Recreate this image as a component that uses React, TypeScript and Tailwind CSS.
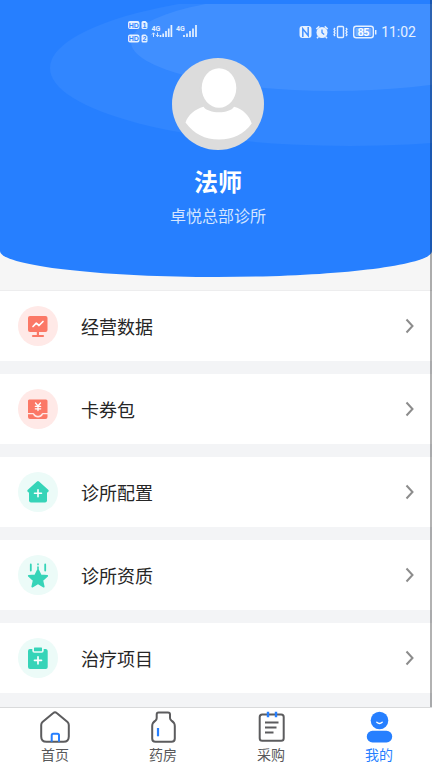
import React from 'react';

interface MenuItem {
  id: string;
  label: string;
  tint: string;
  icon: React.ReactNode;
}

interface TabItem {
  id: string;
  label: string;
  active?: boolean;
  icon: React.ReactNode;
}

const menuItems: MenuItem[] = [
  {
    id: 'data',
    label: '经营数据',
    tint: 'bg-[#ffe9e7] text-[#fb7866]',
    icon: (
      <>
        <rect x="10" y="10" width="19.500" height="16" rx="2" fill="currentColor" />
        <path d="M18.800 26h2.200v4h-2.200z" fill="currentColor" />
        <path d="M15 30h10" stroke="currentColor" strokeWidth="2.200" strokeLinecap="round" />
        <path d="M15 20.500l3.300-3.300 2.700 2.300 4-4" fill="none" stroke="#fff" strokeWidth="1.700" strokeLinecap="round" strokeLinejoin="round" />
      </>
    )
  },
  {
    id: 'coupons',
    label: '卡券包',
    tint: 'bg-[#ffe9e7] text-[#fb7866]',
    icon: (
      <>
        <path d="M12 10.500h16a1.500 1.500 0 0 1 1.500 1.500v12h-4.500q-1 0-1.600 1c-1.400 2.400-5.400 2.400-6.800 0q-.6-1-1.600-1H10V12a1.500 1.500 0 0 1 2-1.500z" fill="currentColor" />
        <path d="M10 25.300h5c1.500 4.300 8.500 4.300 10 0h4.500V28a2 2 0 0 1-2 2H12a2 2 0 0 1-2-2z" fill="currentColor" />
        <path d="M17.500 14l2.500 3 2.500-3M17.300 17.300h5.400M17.300 19.800h5.400M20 17v4.500" fill="none" stroke="#fff" strokeWidth="1.300" strokeLinecap="round" />
      </>
    )
  },
  {
    id: 'settings',
    label: '诊所配置',
    tint: 'bg-[#ecfbf8] text-[#36d4b8]',
    icon: (
      <>
        <path d="M10.800 18.800L20 10.500l9.200 8.300" fill="none" stroke="currentColor" strokeWidth="3" strokeLinecap="round" strokeLinejoin="round" />
        <path d="M20 10l9 8V28.500a2 2 0 0 1-2 2H13a2 2 0 0 1-2-2V18z" fill="currentColor" />
        <path d="M20 17.800v7M16.500 21.300h7" stroke="#fff" strokeWidth="1.600" strokeLinecap="round" />
      </>
    )
  },
  {
    id: 'certificates',
    label: '诊所资质',
    tint: 'bg-[#ecfbf8] text-[#36d4b8]',
    icon: (
      <>
        <path d="M12.800 9.500v6M27.200 9.500v6" stroke="currentColor" strokeWidth="1.800" strokeLinecap="round" />
        <path d="M20 9v.6M20 12v1.500" stroke="currentColor" strokeWidth="1.600" strokeLinecap="round" />
        <path d="M20 14.500l2.700 5.700 6.600.7-4.900 4.400 1.400 6.400-5.800-3.300-5.800 3.300 1.400-6.400-4.900-4.400 6.600-.7z" fill="currentColor" stroke="currentColor" strokeWidth="1.600" strokeLinejoin="round" />
      </>
    )
  },
  {
    id: 'treatments',
    label: '治疗项目',
    tint: 'bg-[#ecfbf8] text-[#36d4b8]',
    icon: (
      <>
        <path d="M12 11h2.300v1.700a2 2 0 0 0 2 2h7.400a2 2 0 0 0 2-2V11H28a2 2 0 0 1 1.700 2v16a2 2 0 0 1-2 2H12a2 2 0 0 1-2-2V13a2 2 0 0 1 2-2z" fill="currentColor" />
        <rect x="16" y="9.500" width="8" height="3.800" rx=".6" fill="currentColor" />
        <path d="M20 18.800v7M16.500 22.300h7" stroke="#fff" strokeWidth="1.700" strokeLinecap="round" />
      </>
    )
  }
];

const tabs: TabItem[] = [
  {
    id: 'home',
    label: '首页',
    icon: (
      <>
        <path d="M14.300 3q1.700-1.500 3.400 0l10.800 9q1.300 1.200 1.300 3v11.500q0 5.300-5.300 5.300h-17q-5.300 0-5.300-5.300V15q0-1.800 1.300-3z" fill="none" stroke="#5c5c5e" strokeWidth="2" />
        <path d="M12.700 31.800v-6.500q0-1.500 1.500-1.500h4.300q1.500 0 1.500 1.500v6.500" fill="none" stroke="#267fff" strokeWidth="2" />
      </>
    )
  },
  {
    id: 'pharmacy',
    label: '药房',
    icon: (
      <>
        <path d="M11.500 2.500h9.500q2 0 2 2V8q0 1.500 1.500 2.600 3.300 2.200 3.300 5.400v12.500q0 3.300-3.300 3.300H8.500Q5.200 31.800 5.200 28.500V16q0-3.200 3.200-5.400Q9.700 9.600 9.700 8V4.500q0-2 1.800-2z" fill="none" stroke="#5c5c5e" strokeWidth="2" />
        <path d="M11 18v8.300" stroke="#267fff" strokeWidth="2.200" />
      </>
    )
  },
  {
    id: 'purchase',
    label: '采购',
    icon: (
      <>
        <rect x="4.700" y="4.500" width="24" height="26.300" rx="2.500" fill="none" stroke="#5c5c5e" strokeWidth="2" />
        <path d="M13 1.800v5.500M21 1.800v5.500" stroke="#267fff" strokeWidth="2.400" />
        <path d="M10 12.500h13.500M10 17.500h11.500M10 22.500h8.500" stroke="#5c5c5e" strokeWidth="2" />
      </>
    )
  },
  {
    id: 'mine',
    label: '我的',
    active: true,
    icon: (
      <>
        <circle cx="16.500" cy="10.500" r="8.800" fill="#267fff" />
        <rect x="3.800" y="20.800" width="25.400" height="11.700" rx="5.700" fill="#267fff" />
        <path d="M13.800 12.300q2.700 2.400 5.400 0" fill="none" stroke="#fff" strokeWidth="1.400" strokeLinecap="round" />
      </>
    )
  }
];

const StatusBar: React.FC = () => (
  <div className="flex h-6 items-center justify-between pl-32 pr-4 text-[#e6f1ff]">
    <svg className="h-6 w-[72px]" viewBox="0 0 72 24" fill="currentColor" fontFamily="'Liberation Sans', sans-serif" fontWeight="bold">
      <rect x="0" y="1" width="11.500" height="8" rx="2" />
      <rect x="0" y="14.500" width="11.500" height="8" rx="2" />
      <path d="M13.500 2.500q0-1.500 1.500-1.500h2.500l2 2V7.500q0 1.500-1.500 1.500H15q-1.500 0-1.500-1.500zM13.500 16q0-1.500 1.500-1.500h2.500l2 2V21q0 1.500-1.500 1.500H15q-1.500 0-1.500-1.500z" />
      <g fill="#3487ff" fontSize="7" textAnchor="middle">
        <text x="5.700" y="7.500">HD</text>
        <text x="5.700" y="21">HD</text>
        <text x="16.500" y="7.500">1</text>
        <text x="16.500" y="21">2</text>
      </g>
      <g fontSize="7" fontFamily="'Liberation Sans Narrow', Roboto, sans-serif">
        <text x="23.500" y="10.500">4G</text>
        <text x="48" y="10.500">4G</text>
      </g>
      <path d="M24 14.500l1.500-1.700 1.500 1.700M25.500 13v4M28 15l1.500 1.700L31 15M29.500 12.500v4" fill="none" stroke="currentColor" strokeWidth=".9" />
      <path d="M32.500 15v2M35.200 13.500v3.500M38 11v6M40.700 8.500v8.500M43.400 5v12M56 15v2M59 13.500v3.500M62 11v6M65 8.500v8.500M68 5v12" stroke="currentColor" strokeWidth="1.700" />
    </svg>
    <div className="flex items-center gap-1">
      <svg className="h-4 w-[78px]" viewBox="0 0 78 16" fill="none" stroke="currentColor">
        <path d="M3.500 2h6q3 0 3 3v6q0 3-3 3h-6q-3 0-3-3V5q0-3 3-3z" fill="currentColor" stroke="none" />
        <path d="M3.800 13V4.800l5.400 6.700V3" stroke="#408fff" strokeWidth="1.500" />
        <circle cx="23" cy="8.500" r="5.500" fill="currentColor" stroke="none" />
        <path d="M17.300 5l3-2.600M28.700 5l-3-2.600M19.300 12.700l-1.300 1.500M26.700 12.700l1.300 1.500" strokeWidth="1.500" />
        <path d="M23 5.500v3.300l2.200 1.700" stroke="#408fff" strokeWidth="1.300" />
        <rect x="38.500" y="2.500" width="6" height="11" rx="1" strokeWidth="1.400" />
        <path d="M36 4l-1 1.300 1 1.300-1 1.400 1 1.300-1 1.400 1 1.300M47 4l1 1.300-1 1.300 1 1.400-1 1.300 1 1.400-1 1.300" strokeWidth="1.300" />
        <rect x="54.700" y="2.200" width="19.600" height="11.600" rx="2.500" strokeWidth="1.400" />
        <rect x="56.500" y="4" width="16" height="8" rx="1" fill="#73adff" stroke="none" />
        <path d="M76.700 6v4.500" strokeWidth="1.500" />
        <text x="64.500" y="11.700" fontSize="10.500" fontWeight="bold" textAnchor="middle" fontFamily="'Liberation Sans', sans-serif" fill="#fff" stroke="none">85</text>
      </svg>
      <span className="font-[Roboto,sans-serif] text-[14px] leading-4">11:02</span>
    </div>
  </div>
);

const HeaderBackground: React.FC = () => (
  <svg className="absolute inset-0 h-full w-full" viewBox="0 0 432 277" preserveAspectRatio="none" aria-hidden="true">
    <defs>
      <clipPath id="belowTop">
        <rect x="0" y="4" width="432" height="273" />
      </clipPath>
    </defs>
    <path d="M0 0H432V251C432 265.400 336 277 217 277S0 265.400 0 251z" fill="#267fff" />
    <g clipPath="url(#belowTop)">
      <ellipse cx="350" cy="68" rx="300" ry="78" fill="#3186ff" />
      <ellipse cx="333" cy="42" rx="202" ry="49" fill="#408fff" />
    </g>
  </svg>
);

const ProfileHeader: React.FC = () => (
  <header className="relative pb-[50px] pt-5">
    <HeaderBackground />
    <div className="relative">
      <StatusBar />
      <div className="mt-[14px] flex flex-col items-center pl-1">
        <svg className="h-[92px] w-[92px]" viewBox="0 0 92 92" role="img" aria-label="头像">
          <circle cx="46" cy="46" r="46" fill="#dcdcdc" />
          <path d="M31.500 48.700C36 56 58 56 62 48.700C71 51 77.500 58 79.700 65.500C72 76 61 81.500 47 81.500S22 76 13.500 64.500C16 57 23 51 31.500 48.700z" fill="#fff" />
          <ellipse cx="47" cy="30" rx="19.500" ry="22" fill="#dcdcdc" />
          <ellipse cx="47" cy="30" rx="17.300" ry="19.700" fill="#fff" />
        </svg>
        <h1 className="mt-[15px] text-2xl font-bold leading-8 text-white">法师</h1>
        <p className="mt-[6px] text-base text-[#d4e5ff]">卓悦总部诊所</p>
      </div>
    </div>
  </header>
);

const MenuRow: React.FC<{ item: MenuItem }> = ({ item }) => (
  <li>
    <a href={`#${item.id}`} className="flex h-[70px] items-center bg-white pl-[18px] pr-[18px]">
      <span className={`h-10 w-10 shrink-0 rounded-full ${item.tint}`}>
        <svg className="h-10 w-10" viewBox="0 0 40 40" aria-hidden="true">
          {item.icon}
        </svg>
      </span>
      <span className="ml-[23px] flex-1 text-lg text-[#262626]">{item.label}</span>
      <svg className="h-4 w-[9px]" viewBox="0 0 9 16" fill="none" stroke="#8c8c8c" strokeWidth="2" aria-hidden="true">
        <path d="M1.500 1.500L7.500 8l-6 6.500" />
      </svg>
    </a>
  </li>
);

const TabBar: React.FC = () => (
  <nav className="sticky bottom-0 grid h-[61px] grid-cols-4 border-t border-[#d9dadb] bg-white">
    {tabs.map((tab) => (
      <a
        key={tab.id}
        href={`#${tab.id}`}
        aria-current={tab.active ? 'page' : undefined}
        className={`flex flex-col items-center pl-[2px] pt-[2px] text-sm ${tab.active ? 'text-[#267fff]' : 'text-[#58585a]'}`}
      >
        <svg className="h-[34px] w-8" viewBox="0 0 32 34" aria-hidden="true">
          {tab.icon}
        </svg>
        {tab.label}
      </a>
    ))}
  </nav>
);

const App: React.FC = () => (
  <div className="relative flex min-h-screen flex-col bg-[#f3f4f6] font-['Noto_Sans_CJK_SC',sans-serif]">
    <div className="relative flex-1">
      <div className="border-b border-[#ededee] bg-[#f6f6f6] pb-[13px]">
        <ProfileHeader />
      </div>
      <ul className="flex flex-col gap-[13px]">
        {menuItems.map((item) => (
          <MenuRow key={item.id} item={item} />
        ))}
      </ul>
      {/* Scroll indicator */}
      <div className="absolute inset-y-0 right-0 w-[2px] bg-black/30" />
    </div>
    <TabBar />
  </div>
);

export default App;
